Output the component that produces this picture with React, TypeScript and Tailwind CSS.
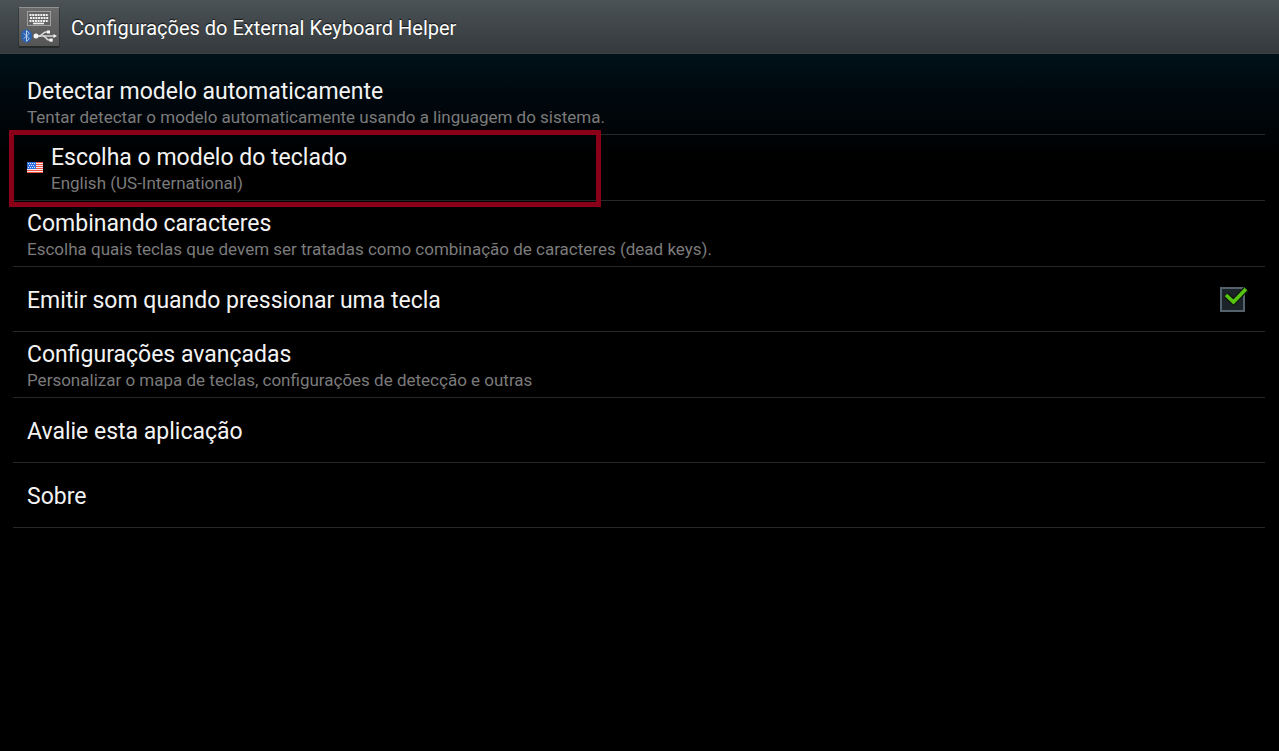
type Preference = {
  id: string;
  title: string;
  summary?: string;
  kind?: "flag" | "checkbox";
};

const PREFERENCES: Preference[] = [
  {
    id: "auto-detect",
    title: "Detectar modelo automaticamente",
    summary: "Tentar detectar o modelo automaticamente usando a linguagem do sistema.",
  },
  {
    id: "layout",
    title: "Escolha o modelo do teclado",
    summary: "English (US-International)",
    kind: "flag",
  },
  {
    id: "dead-keys",
    title: "Combinando caracteres",
    summary:
      "Escolha quais teclas que devem ser tratadas como combinação de caracteres (dead keys).",
  },
  { id: "sound", title: "Emitir som quando pressionar uma tecla", kind: "checkbox" },
  {
    id: "advanced",
    title: "Configurações avançadas",
    summary: "Personalizar o mapa de teclas, configurações de detecção e outras",
  },
  { id: "rate", title: "Avalie esta aplicação" },
  { id: "about", title: "Sobre" },
];

function AppIcon() {
  return (
    <svg viewBox="0 0 42 42" className="h-[42px] w-[42px] shrink-0" aria-hidden="true">
      <defs>
        <linearGradient id="tile" x1="0" y1="0" x2="0" y2="1">
          <stop offset="0" stopColor="#6c6c6c" />
          <stop offset="1" stopColor="#555555" />
        </linearGradient>
      </defs>
      <rect x="0.5" y="1" width="41" height="41" rx="1.5" fill="#272a2b" />
      <rect x="1" y="1" width="40" height="39" rx="1" fill="url(#tile)" />
      <rect x="1" y="1" width="40" height="1" fill="#929292" />
      <rect x="9.5" y="5.5" width="23" height="14" fill="#646464" stroke="#a0a0a0" />
      <g stroke="#f0f0f0" strokeWidth="2" strokeDasharray="2 0.7">
        <path d="M11.5 9h19" />
        <path d="M12 12h18.5" />
        <path d="M11.5 15h19" />
      </g>
      <path d="M15 17.5h11" stroke="#f0f0f0" strokeWidth="1.6" />
      <ellipse cx="8.5" cy="30" rx="5.5" ry="6.8" fill="#2a62ae" />
      <path
        d="M5.800 27.300l5.400 5.400-2.700 2.700v-10.800l2.700 2.700-5.400 5.400"
        fill="none"
        stroke="#c3d6ee"
        strokeWidth="0.9"
      />
      <g fill="none" stroke="#dedede" strokeWidth="1.4">
        <path d="M18 30h18" />
        <path d="M21 30c3 0 4-4 7-4h2" />
        <path d="M25 30c3 0 3 4 6 4h2" />
      </g>
      <g fill="#f4f4f4">
        <circle cx="18" cy="30" r="2.5" />
        <rect x="29" y="24.5" width="3" height="3" />
        <rect x="31.5" y="32.5" width="3.2" height="3.2" />
        <path d="M35.5 28l3.5 2-3.5 2z" />
      </g>
    </svg>
  );
}

function UsFlag() {
  return (
    <svg viewBox="0 0 16 11" className="mb-[3px] h-[11px] w-4 shrink-0" aria-hidden="true">
      <rect width="16" height="11" fill="#f6e9e6" />
      <g fill="#ee5144">
        <rect width="16" height="1" y="0" />
        <rect width="16" height="1" y="2" />
        <rect width="16" height="1" y="4" />
        <rect width="16" height="1" y="6" />
        <rect width="16" height="1" y="8" />
        <rect width="16" height="1" y="10" />
      </g>
      <rect width="9" height="7" fill="#2f6fe0" />
      <g fill="#dfeaff">
        <path d="M1 1h1v1H1zM3 1h1v1H3zM5 1h1v1H5zM7 1h1v1H7z" />
        <path d="M2 3h1v1H2zM4 3h1v1H4zM6 3h1v1H6z" />
        <path d="M1 5h1v1H1zM3 5h1v1H3zM5 5h1v1H5zM7 5h1v1H7z" />
      </g>
    </svg>
  );
}

function PreferenceText({ title, summary }: { title: string; summary?: string }) {
  return (
    <span className="flex min-w-0 flex-1 flex-col">
      <span
        className={
          summary
            ? "pt-0.5 text-[23px] leading-[26px] text-[#f3f3f3]"
            : "pt-1 text-[23px] leading-[26px] text-[#f3f3f3]"
        }
      >
        {title}
      </span>
      {summary && <span className="text-[17px] leading-6 text-[#7b7b7b]">{summary}</span>}
    </span>
  );
}

function PreferenceRow({ item }: { item: Preference }) {
  if (item.kind === "checkbox") {
    return (
      <label htmlFor={item.id} className="flex min-h-16 items-center pr-5 pl-3.5">
        <PreferenceText title={item.title} />
        <span className="relative h-6 w-[25px] shrink-0">
          <input
            id={item.id}
            type="checkbox"
            defaultChecked
            className="peer block h-[25px] w-[25px] appearance-none border-2 border-[#53626d] bg-[#1b2328]"
          />
          <svg
            viewBox="0 0 28 28"
            className="pointer-events-none absolute top-0 left-0 hidden h-7 w-7 peer-checked:block"
            aria-hidden="true"
          >
            <path d="M6 8l7.5 7L26 2" fill="none" stroke="#10160f" strokeWidth="6" />
            <path d="M6 8l7.5 7L26 2" fill="none" stroke="#56c510" strokeWidth="3.6" />
          </svg>
        </span>
      </label>
    );
  }

  return (
    <button
      type="button"
      className={
        item.summary
          ? "flex w-full items-center gap-2 px-3.5 pt-2 pb-[5px] text-left"
          : "flex min-h-16 w-full items-center px-3.5 text-left"
      }
    >
      {item.kind === "flag" && <UsFlag />}
      <PreferenceText title={item.title} summary={item.summary} />
    </button>
  );
}

export default function App() {
  return (
    <div className="min-h-screen bg-black bg-[linear-gradient(#001219_54px,#00080e_95px,#000_160px)] font-[Roboto,sans-serif]">
      <header className="flex h-[54px] items-center gap-[11px] border-b border-[#3f4142] bg-linear-to-b from-[#4b5356] to-[#34393c] px-[18px]">
        <AppIcon />
        <h1 className="pt-0.5 text-[20px] leading-7 text-white [text-shadow:0_-1px_1px_#111]">
          Configurações do External Keyboard Helper
        </h1>
      </header>
      <main className="pt-[15px] pr-3.5 pl-[13px]">
        <ul>
          {PREFERENCES.map((item) => (
            <li key={item.id} className="relative border-b border-[#252728]">
              <PreferenceRow item={item} />
              {item.id === "layout" && (
                <div className="pointer-events-none absolute -top-[5px] -left-1 z-10 h-[77px] w-[592px] border-[5px] border-[#8a0018]" />
              )}
            </li>
          ))}
        </ul>
      </main>
    </div>
  );
}
